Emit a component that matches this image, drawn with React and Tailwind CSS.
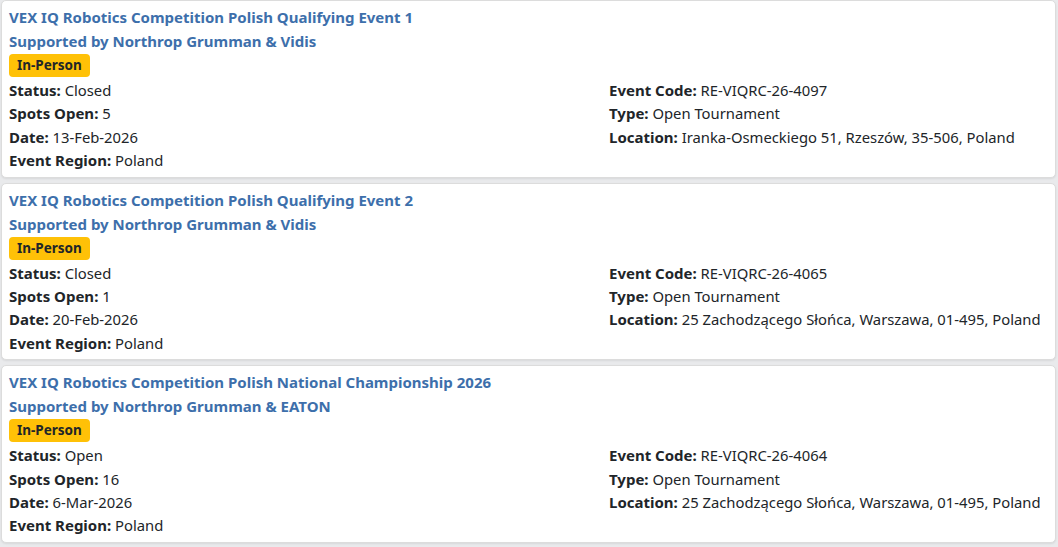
import React from "react";

const events = [
  {
    title: "VEX IQ Robotics Competition Polish Qualifying Event 1",
    sub: "Supported by Northrop Grumman & Vidis",
    status: "Closed",
    spots: "5",
    date: "13-Feb-2026",
    code: "RE-VIQRC-26-4097",
    location: "Iranka-Osmeckiego 51, Rzeszów, 35-506, Poland",
  },
  {
    title: "VEX IQ Robotics Competition Polish Qualifying Event 2",
    sub: "Supported by Northrop Grumman & Vidis",
    status: "Closed",
    spots: "1",
    date: "20-Feb-2026",
    code: "RE-VIQRC-26-4065",
    location: "25 Zachodzącego Słońca, Warszawa, 01-495, Poland",
  },
  {
    title: "VEX IQ Robotics Competition Polish National Championship 2026",
    sub: "Supported by Northrop Grumman & EATON",
    status: "Open",
    spots: "16",
    date: "6-Mar-2026",
    code: "RE-VIQRC-26-4064",
    location: "25 Zachodzącego Słońca, Warszawa, 01-495, Poland",
  },
];

function Row({ label, value }) {
  return (
    <div className="h-[23.4px] leading-[23.4px] whitespace-nowrap">
      <span className="font-bold text-[15px]">{label}:</span> {value}
    </div>
  );
}

export default function App() {
  return (
    <div
      className="w-[1058px] h-[547px] overflow-hidden bg-[#e9eaec] text-[#212529] text-[14.8px]"
      style={{ fontFamily: '"Noto Sans", "Open Sans", sans-serif' }}
    >
      <div className="flex flex-col gap-[5px] pl-[1px] pr-[2px]">
        {events.map((e, i) => (
          <div
            key={i}
            className="bg-white border border-[#dcdcdc] rounded-[5px] pt-[4px] pb-[4px] px-[7px] shadow-[0_1px_2px_rgba(0,0,0,0.08)]"
          >
            <div className="text-[#3d6fab] font-bold text-[15px] leading-[24px]">{e.title}</div>
            <div className="text-[#3d6fab] font-bold text-[15px] leading-[24px]">{e.sub}</div>
            <div className="mb-[1px]">
              <span className="inline-block bg-[#ffc107] rounded-[4px] px-[8px] h-[23px] leading-[23px] text-[13.5px] font-bold text-[#212529]">
                In-Person
              </span>
            </div>
            <div className="grid grid-cols-[600px_1fr] pt-[1px]">
              <div>
                <Row label="Status" value={e.status} />
                <Row label="Spots Open" value={e.spots} />
                <Row label="Date" value={e.date} />
                <Row label="Event Region" value="Poland" />
              </div>
              <div>
                <Row label="Event Code" value={e.code} />
                <Row label="Type" value="Open Tournament" />
                <Row label="Location" value={e.location} />
              </div>
            </div>
          </div>
        ))}
      </div>
    </div>
  );
}
